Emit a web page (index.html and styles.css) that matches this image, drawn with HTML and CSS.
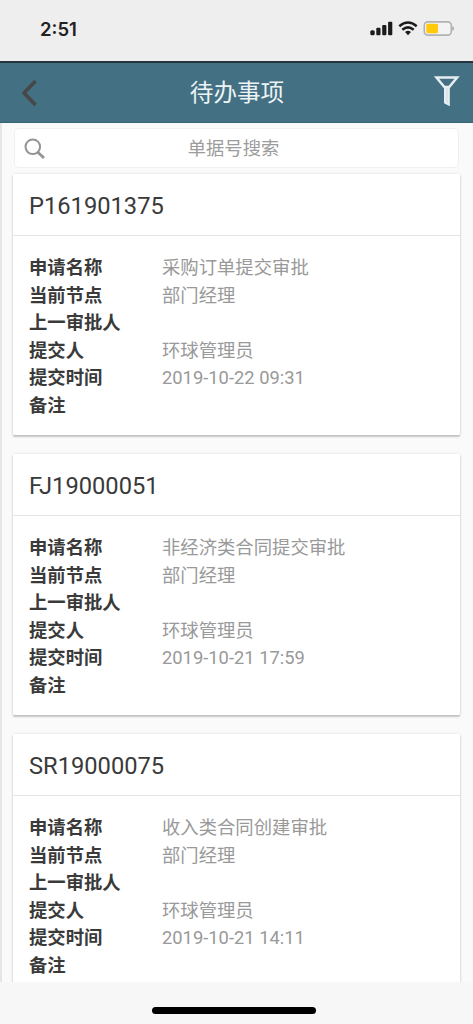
FILE: index.html
```html
<!DOCTYPE html>
<html lang="zh-CN">
<head>
<meta charset="utf-8">
<title>待办事项</title>
<link rel="stylesheet" href="styles.css">
</head>
<body>
<div class="app">
  <div class="status-bar">
    <span class="clock">2:51</span>
    <svg class="status-icons" width="86" height="16" viewBox="0 0 86 16">
      <g fill="#1c1c1c">
        <rect x="0.3" y="9.3" width="4.4" height="5" rx="1.5"/>
        <rect x="6.3" y="6.8" width="4.2" height="7.5" rx="1"/>
        <rect x="12.2" y="4" width="4.2" height="10.3" rx="1"/>
        <rect x="18.1" y="0.8" width="4.2" height="13.5" rx="1"/>
        <path d="M38 14.2l-3-3.2q3-2.4 6 0z"/>
      </g>
      <g fill="none" stroke="#1c1c1c" stroke-width="2.5">
        <path d="M29.3 5.2q8.7-7.4 17.4 0"/>
        <path d="M32.3 8.700q5.700-4.700 11.400 0"/>
      </g>
      <rect x="54.3" y="0.900" width="27" height="13.200" rx="3.500" fill="#f3f3f3" stroke="#b3b3b3" stroke-width="1.600"/>
      <rect x="56.300" y="2.800" width="11.700" height="9.500" rx="1.500" fill="#ffca0a"/>
      <path d="M82.300 5q3.500 2.500 0 5z" fill="#a5a5a5"/>
    </svg>
  </div>
  <header class="nav-bar">
    <svg class="back" width="18" height="28" viewBox="0 0 18 28"><path d="M15.500 2L4 14l11.500 12" fill="none" stroke="#474747" stroke-width="3.700" stroke-linejoin="round"/></svg>
    <h1 class="nav-title">待办事项</h1>
    <svg class="filter" width="26" height="32" viewBox="0 0 26 32">
      <path d="M2.500 2.500h20.600l-7.900 9.500h-4.800z" fill="none" stroke="#e6eef2" stroke-width="2.500"/>
      <path d="M10 11h5.800v20.200l-5.800-3z" fill="#e6eef2"/>
      <path d="M13 13v15" stroke="#cfdde3" stroke-width="1"/>
    </svg>
  </header>
  <main class="content">
    <div class="search">
      <svg class="search-icon" width="22" height="22" viewBox="0 0 22 22" fill="none" stroke="#949494"><circle cx="8.800" cy="8.800" r="7.300" stroke-width="2"/><path d="M13.500 14l6.500 6" stroke-width="2.800"/></svg>
      <span class="search-hint">单据号搜索</span>
    </div>
    <section class="card">
      <h2 class="card-title">P161901375</h2>
      <dl class="fields">
        <dt>申请名称</dt><dd>采购订单提交审批</dd>
        <dt>当前节点</dt><dd>部门经理</dd>
        <dt>上一审批人</dt><dd></dd>
        <dt>提交人</dt><dd>环球管理员</dd>
        <dt>提交时间</dt><dd>2019-10-22 09:31</dd>
        <dt>备注</dt><dd></dd>
      </dl>
    </section>
    <section class="card">
      <h2 class="card-title">FJ19000051</h2>
      <dl class="fields">
        <dt>申请名称</dt><dd>非经济类合同提交审批</dd>
        <dt>当前节点</dt><dd>部门经理</dd>
        <dt>上一审批人</dt><dd></dd>
        <dt>提交人</dt><dd>环球管理员</dd>
        <dt>提交时间</dt><dd>2019-10-21 17:59</dd>
        <dt>备注</dt><dd></dd>
      </dl>
    </section>
    <section class="card">
      <h2 class="card-title">SR19000075</h2>
      <dl class="fields">
        <dt>申请名称</dt><dd>收入类合同创建审批</dd>
        <dt>当前节点</dt><dd>部门经理</dd>
        <dt>上一审批人</dt><dd></dd>
        <dt>提交人</dt><dd>环球管理员</dd>
        <dt>提交时间</dt><dd>2019-10-21 14:11</dd>
        <dt>备注</dt><dd></dd>
      </dl>
    </section>
  </main>
  <footer class="home-area"><div class="home-indicator"></div></footer>
</div>
</body>
</html>
```
FILE: styles.css
```css
* { box-sizing: border-box; }
body {
  margin: 0;
  font-family: Roboto, "Noto Sans CJK SC", sans-serif;
  color: #3a3a3a;
}
.app {
  height: 1024px;
  display: flex;
  flex-direction: column;
  overflow: hidden;
}
.status-bar {
  flex: none;
  height: 61px;
  padding: 0 17px 3px 40px;
  display: flex;
  align-items: center;
  justify-content: space-between;
  background: #eeeeee;
}
.clock {
  font: 600 18.500px/20px Inter, sans-serif;
  color: #222;
}
.nav-bar {
  flex: none;
  height: 62px;
  border-top: 2px solid #26333a;
  border-bottom: 1px solid #356477;
  padding: 0 13px 0 20px;
  display: grid;
  grid-template-columns: 54px 1fr 60px;
  align-items: center;
  background: #437183;
}
.nav-title {
  margin: 0;
  text-align: center;
  font-weight: 400;
  font-size: 23.600px;
  line-height: 30px;
  color: #edf3f5;
}
.filter {
  justify-self: end;
  margin-bottom: 4px;
}
.content {
  flex: 1;
  min-height: 0;
  overflow: hidden;
  padding: 5px 13px 0 11px;
  border-left: 2px solid #e6e6e6;
  background: #fafafa;
}
.search {
  height: 40px;
  margin: 0 1px 6px;
  display: grid;
  grid-template-columns: 40px 1fr 46px;
  align-items: center;
  border: 1px solid #f0f0f0;
  border-radius: 5px;
  background: #fff;
}
.search-icon {
  margin-left: 9px;
  margin-top: 2px;
}
.search-hint {
  padding-top: 2px;
  text-align: center;
  font-size: 18.300px;
  line-height: 26px;
  color: #9c9c9c;
}
.card {
  height: 261px;
  margin-bottom: 19px;
  background: #fff;
  border-radius: 1px;
  box-shadow: 0 2px 2px rgba(0, 0, 0, .2), 0 0 3px rgba(0, 0, 0, .12);
}
.card-title {
  height: 62px;
  margin: 0 0 1px;
  padding: 1px 16px 0;
  border-bottom: 1px solid #e4e4e4;
  font-weight: 400;
  font-size: 23.700px;
  line-height: 62px;
}
.fields {
  margin: 0;
  padding: 17px 17px 0 16px;
  display: grid;
  grid-template-columns: 133px 1fr;
  grid-auto-rows: 27.500px;
  font-size: 18.350px;
  line-height: 27.500px;
}
.fields dt { font-weight: 700; }
.fields dd {
  margin: 0;
  color: #999;
}
.home-area {
  flex: none;
  height: 42px;
  padding-top: 25px;
  background: #f7f7f7;
}
.home-indicator {
  width: 164px;
  height: 7px;
  margin: 0 auto 0 152px;
  border-radius: 4px;
  background: #000;
}
```
